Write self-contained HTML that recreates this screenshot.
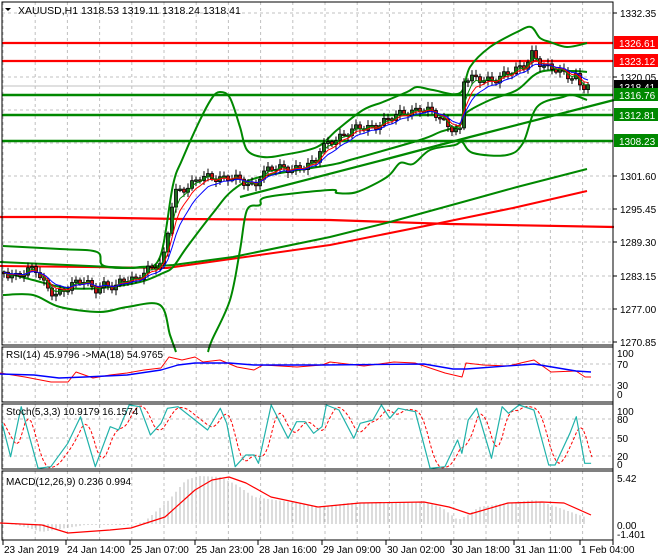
<!DOCTYPE html>
<html><head><meta charset="utf-8"><style>
html,body{margin:0;padding:0;background:#fff;}
svg{display:block;font-family:"Liberation Sans",sans-serif;}
</style></head><body>
<svg id="s" width="660" height="560" xmlns="http://www.w3.org/2000/svg">
<rect width="660" height="560" fill="#fff"/>
<g id="grid"></g>
<g id="main"></g>
<g id="panels"></g>
<g id="axis" font-size="10" fill="#000"></g>
<text x="18" y="14" font-size="10.5">XAUUSD,H1  1318.53 1319.11 1318.24 1318.41</text>
<path d="M5 8 L11 8 L8 11 Z" fill="#000"/>
</svg>
<script>
(function(){
var NS="http://www.w3.org/2000/svg";
function el(p,t,a){var e=document.createElementNS(NS,t);for(var k in a)e.setAttribute(k,a[k]);document.getElementById(p).appendChild(e);return e;}
function interp(pts,x){if(x<=pts[0][0])return pts[0][1];for(var i=1;i<pts.length;i++){if(x<=pts[i][0]){var a=pts[i-1],b=pts[i];return a[1]+(b[1]-a[1])*(x-a[0])/(b[0]-a[0]);}}return pts[pts.length-1][1];}
function pl(p,pts,c,w,extra){var d=pts.map(function(q,i){return (i?'L':'M')+q[0].toFixed(1)+' '+q[1].toFixed(1)}).join(' ');var a={d:d,fill:'none',stroke:c,'stroke-width':w,'stroke-linejoin':'round'};if(extra)for(var k in extra)a[k]=extra[k];return el(p,'path',a);}
function sm(p,pts,c,w){var d='M'+pts[0][0]+' '+pts[0][1];for(var i=0;i<pts.length-1;i++){var p0=pts[Math.max(0,i-1)],p1=pts[i],p2=pts[i+1],p3=pts[Math.min(pts.length-1,i+2)];d+=' C'+(p1[0]+(p2[0]-p0[0])/6).toFixed(1)+' '+(p1[1]+(p2[1]-p0[1])/6).toFixed(1)+' '+(p2[0]-(p3[0]-p1[0])/6).toFixed(1)+' '+(p2[1]-(p3[1]-p1[1])/6).toFixed(1)+' '+p2[0]+' '+p2[1];}return el(p,'path',{d:d,fill:'none',stroke:c,'stroke-width':w});}
function sample(pts,x0,x1,st){var r=[];for(var x=x0;x<=x1;x+=st)r.push([x,interp(pts,x)]);return r;}
var panels=[[2,345],[347,402],[404,469],[471,540]];
for(var gx=3;gx<613;gx+=32.2){panels.forEach(function(p){el('grid','line',{x1:gx,x2:gx,y1:p[0],y2:p[1],stroke:'#c0c0c0','stroke-dasharray':'3,3'});});}
[13,43,77,110,143,176,209,242,276,309,342,364,385,419,438,456].forEach(function(y){el('grid','line',{x1:2,x2:613,y1:y,y2:y,stroke:'#c0c0c0','stroke-dasharray':'3,3'});});
el('grid','line',{x1:2,x2:613,y1:86,y2:86,stroke:'#c0c0c0'});
var M='main';
pl(M,[[0,217],[60,217],[120,218],[180,219],[330,220],[450,224],[614,227]],'#f00',2.2);
pl(M,[[2,43],[613,43]],'#f00',2.2);pl(M,[[2,61],[613,61]],'#f00',2.2);
pl(M,[[2,95],[613,95]],'#080',2.4);pl(M,[[2,115],[613,115]],'#080',2.4);pl(M,[[2,141],[613,141]],'#080',2.4);
pl(M,[[240,197],[383,160],[470,137],[614,100]],'#080',2.2);
pl(M,[[0,266],[167,268],[330,245],[440,223],[513,208],[587,191]],'#f00',2);
pl(M,[[0,262],[133,268],[173,265],[233,257],[330,237],[390,222],[470,200],[517,187],[587,169]],'#080',2);
sm(M,[[3,246],[60,249],[97,252],[104,266],[140,267],[160,257],[173,185],[182,160],[200,120],[212,98],[220,92],[230,98],[240,127],[247,150],[263,157],[283,155],[317,147],[337,130],[363,110],[383,102],[407,92],[417,87],[433,90],[460,93],[470,67],[490,47],[517,32],[531,27],[540,38],[550,42],[567,47],[587,43]],'#080',2);
sm(M,[[3,295],[33,295],[60,307],[100,312],[127,307],[160,305],[170,335],[176,352]],'#080',2);
sm(M,[[208,352],[212,340],[230,300],[240,250],[247,210],[260,205],[267,197],[330,190],[337,193],[357,192],[387,177],[400,163],[413,164],[430,150],[455,145],[462,142],[473,153],[507,155],[523,143],[537,107],[563,97],[573,95],[587,100]],'#080',2);
sm(M,[[3,272],[33,280],[67,288],[100,288],[140,282],[163,273],[173,267],[187,247],[213,213],[233,190],[260,177],[330,165],[350,160],[420,140],[440,132],[460,125],[466,113],[490,100],[517,90],[540,72],[573,71],[587,72]],'#080',2);
var cp=[[3,272],[15,275],[25,272],[35,270],[45,285],[55,293],[65,290],[75,285],[85,280],[95,288],[105,285],[115,290],[120,283],[125,278],[135,278],[145,272],[155,268],[162,265],[166,245],[170,215],[174,190],[180,190],[190,188],[200,178],[210,175],[220,178],[235,180],[245,182],[255,185],[260,175],[270,170],[285,168],[300,167],[315,165],[320,150],[330,140],[345,135],[360,128],[375,125],[390,120],[405,112],[420,108],[435,115],[445,123],[455,128],[460,130],[463,80],[470,80],[480,80],[495,78],[505,75],[515,72],[525,65],[532,52],[538,60],[545,68],[560,72],[570,75],[578,75],[580,85],[585,87],[590,86]];
var prev=interp(cp,3),closes=[];
for(var cx=4,i=0;cx<=590;cx+=4,i++){
 var c=interp(cp,cx)+3.5*Math.sin(i*1.7)+2*Math.sin(i*0.63);
 var o=prev;var hi=Math.min(o,c)-1.5-Math.abs(4*Math.sin(i*2.3));var lo=Math.max(o,c)+1.5+Math.abs(4*Math.cos(i*1.9));
 el(M,'line',{x1:cx,x2:cx,y1:hi,y2:lo,stroke:'#000'});
 var by=Math.min(o,c),bh=Math.max(Math.abs(o-c),1.5);
 el(M,'rect',{x:cx-1.5,y:by,width:3,height:bh,fill:(c<o?'#1f6b1f':'#d01010'),stroke:'#000','stroke-width':0.8});
 closes.push([cx,c]);prev=c;
}
function ema(arr,n,col){var k=2/(n+1),v=arr[0][1],r=[];arr.forEach(function(q){v=v+k*(q[1]-v);r.push([q[0],v]);});pl(M,r,col,1);}
ema(closes,3,'#080');ema(closes,5,'#f00');ema(closes,8,'#00f');
var P='panels';
el(P,'rect',{x:2,y:2,width:611,height:343,fill:'none',stroke:'#000'});
[[347,55],[404,65],[471,69]].forEach(function(p){el(P,'rect',{x:2,y:p[0],width:611,height:p[1],fill:'none',stroke:'#000'});});
el(P,'line',{x1:613,x2:613,y1:2,y2:545,stroke:'#000'});
pl(P,[[0,373],[25,377],[51,382],[68,382],[76,372],[93,378],[110,375],[127,373],[144,370],[161,368],[169,357],[182,360],[195,357],[203,362],[220,360],[237,367],[254,370],[263,365],[297,367],[322,365],[330,362],[364,366],[394,362],[415,363],[445,373],[462,377],[466,363],[483,365],[508,366],[525,362],[534,360],[551,372],[576,371],[585,377],[591,377]],'#f00',1);
pl(P,[[0,374],[34,375],[59,378],[85,377],[127,375],[161,370],[178,365],[195,363],[229,363],[254,365],[322,365],[424,364],[453,369],[466,369],[534,364],[576,371],[591,372]],'#00f',1.4);
el(P,'text',{x:6,y:358,'font-size':10}).textContent='RSI(14) 45.9796  ->MA(18) 54.9765';
var st=[[5,250],[25,350],[50,200],[90,385],[120,380],[160,310],[190,230],[225,380],[260,260],[280,270],[305,195],[330,200],[355,285],[380,250],[395,205],[420,200],[460,240],[490,270],[520,205],[535,250],[555,380],[580,345],[600,345],[610,370],[640,195],[680,295],[700,245],[720,245],[740,280],[760,260],[770,195],[800,210],[835,295],[850,250],[880,240],[900,195],[920,235],[940,205],[980,215],[1015,385],[1050,380],[1080,300],[1090,340],[1105,240],[1125,205],[1160,355],[1185,200],[1200,220],[1225,195],[1260,210],[1295,375],[1310,375],[1345,280],[1360,230],[1380,370],[1395,370]].map(function(q){return [q[0]/2.36,340+q[1]/3];});
var ss=sample(st,2,591,3);var smo=ss.map(function(q,i){var a=ss.slice(Math.max(0,i-3),i+1);return [q[0]+2,a.reduce(function(s,v){return s+v[1]},0)/a.length];});
pl(P,smo,'#f00',1,{'stroke-dasharray':'3,2'});
pl(P,st,'#20b2aa',1.2);
el(P,'text',{x:6,y:415,'font-size':10}).textContent='Stoch(5,3,3) 10.9179 16.1574';
var hist=[[0,523],[17,525],[25,527],[42,532],[85,525],[127,525],[144,522],[169,500],[186,480],[199,476],[220,477],[237,485],[254,497],[297,503],[322,507],[347,503],[424,502],[441,507],[458,520],[466,516],[479,507],[508,503],[534,500],[551,505],[585,517]];
for(var hx=4;hx<=587;hx+=4){var v=interp(hist,hx);el(P,'line',{x1:hx,x2:hx,y1:524,y2:v,stroke:'#b8b8b8'});}
pl(P,[[0,523],[42,525],[68,533],[110,530],[131,528],[165,517],[195,490],[212,480],[229,477],[246,483],[271,497],[318,507],[360,503],[424,502],[449,507],[470,514],[508,503],[542,502],[564,503],[591,515]],'#f00',1.2);
el(P,'text',{x:6,y:485,'font-size':10}).textContent='MACD(12,26,9) 0.236 0.994';
var A='axis';
[[13,'1332.35'],[77,'1320.05'],[176,'1301.60'],[209,'1295.45'],[242,'1289.30'],[276,'1283.15'],[309,'1277.00'],[342,'1270.85']].forEach(function(a){el(A,'line',{x1:613,x2:617,y1:a[0],y2:a[0],stroke:'#000'});el(A,'text',{x:620,y:a[0]+4}).textContent=a[1];});
[[43,'1326.61','#f00'],[61,'1323.12','#f00'],[87,'1318.41','#000'],[95,'1316.76','#080'],[115,'1312.81','#080'],[141,'1308.23','#080']].forEach(function(a){el(A,'rect',{x:614,y:a[0]-7,width:44,height:13,fill:a[2]});el(A,'text',{x:619,y:a[0]+4,fill:'#fff'}).textContent=a[1];});
[[353,'100'],[364,'70'],[385,'30'],[395,'0'],[411,'100'],[419,'80'],[438,'50'],[456,'20'],[465,'0'],[478,'5.42'],[525,'0.00'],[534,'-1.401']].forEach(function(a){el(A,'text',{x:617,y:a[1]=='0'?a[0]+3:a[0]+4,'font-size':10}).textContent=a[1];});
[[3,'23 Jan 2019'],[66,'24 Jan 14:00'],[130,'25 Jan 07:00'],[195,'25 Jan 23:00'],[258,'28 Jan 16:00'],[322,'29 Jan 09:00'],[386,'30 Jan 02:00'],[451,'30 Jan 18:00'],[514,'31 Jan 11:00'],[580,'1 Feb 04:00']].forEach(function(a){el(A,'line',{x1:a[0],x2:a[0],y1:540,y2:545,stroke:'#000'});el(A,'text',{x:a[0]+1,y:553,'font-size':10}).textContent=a[1];});
})();
</script>
</body></html>
